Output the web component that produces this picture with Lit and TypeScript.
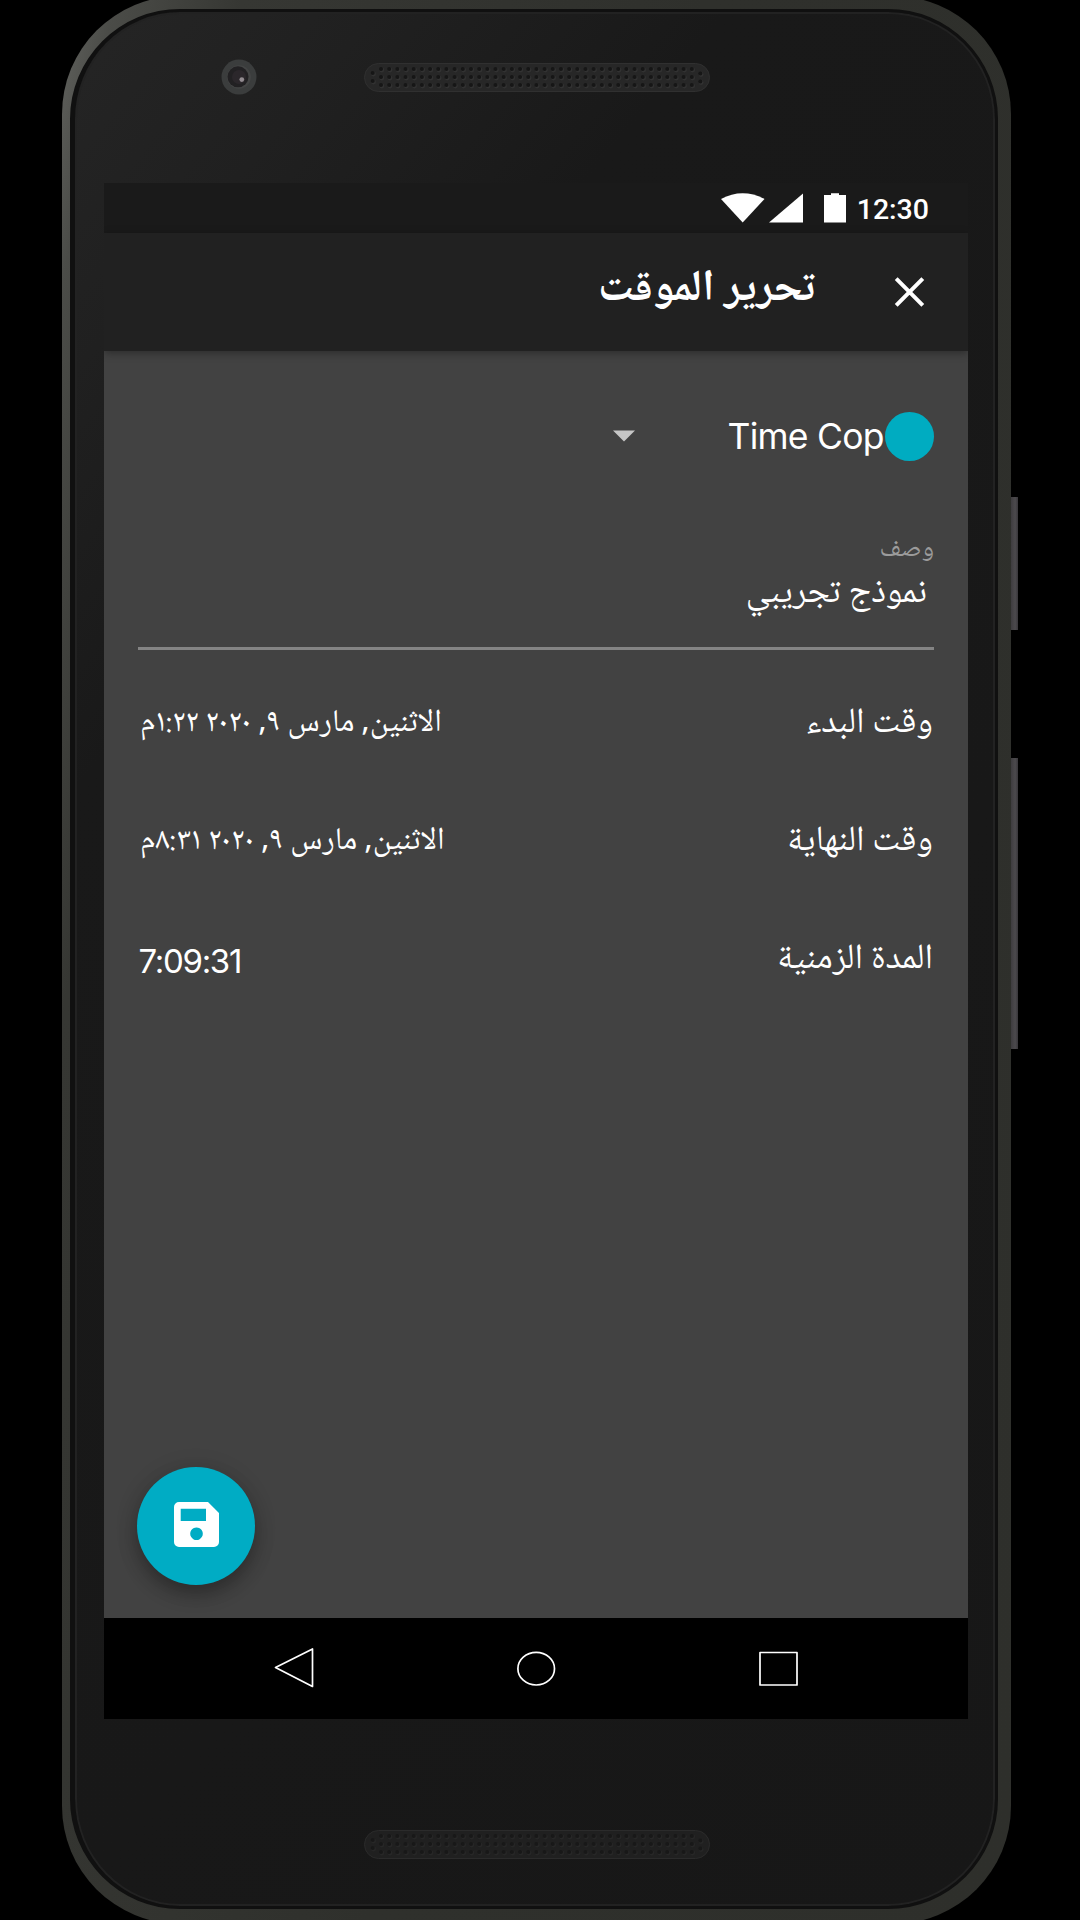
import { LitElement, html, css, svg } from "lit";
import { customElement, property } from "lit/decorators.js";

@customElement("speaker-grille")
class SpeakerGrille extends LitElement {
  @property({ type: Boolean, reflect: true }) dim = false;

  static styles = css`
    :host { display: block; width: 346px; height: 29px; }
    .grille { display: block; }
    .shell { fill: #272727; stroke: #303030; stroke-width: 1; }
    .hole { fill: #161616; }
    .glint { fill: #323232; }
    :host([dim]) .shell { fill: #202020; stroke: #2b2b2b; }
    :host([dim]) .hole { fill: #181818; }
    :host([dim]) .glint { fill: #272727; }
  `;

  render() {
    const points: Array<[number, number]> = [[8.7, 10], [8.7, 18], [336.3, 10.5], [336.3, 18.5]];
    for (let column = 0; column < 39; column++) {
      for (let row = 0; row < 3; row++) {
        points.push([17 + column * 8.18, 6 + row * 8]);
      }
    }
    return html`<svg class="grille" width="346" height="29" viewBox="0 0 346 29">
      <rect class="shell" x=".5" y=".5" width="345" height="28" rx="14"></rect>
      ${points.map(([x, y]) => svg`<circle class="glint" cx=${x + 0.8} cy=${y + 1} r="2.4"></circle><circle class="hole" cx=${x} cy=${y} r="2"></circle>`)}
    </svg>`;
  }
}

@customElement("detail-row")
class DetailRow extends LitElement {
  @property() label = "";
  @property() value = "";
  @property({ type: Boolean, reflect: true }) latin = false;

  static styles = css`
    :host { display: flex; height: 118px; align-items: center; justify-content: space-between; color: #fff; white-space: nowrap; }
    .label { font-size: 35.6px; line-height: 60px; padding-right: 1px; }
    .value { font-size: 31.7px; line-height: 60px; padding-left: 2.5px; }
    :host([latin]) .value { font-size: 33px; letter-spacing: -1.3px; font-family: Inter, sans-serif; padding-top: 3px; padding-left: 1px; }
  `;

  render() {
    return html`<span class="label">${this.label}</span><span class="value">${this.value}</span>`;
  }
}

@customElement("app-root")
class AppRoot extends LitElement {
  static styles = css`
    :host {
      display: block; width: 1080px; height: 1920px; overflow: hidden; background: #000;
      font-family: "Noto Naskh Arabic UI", "Noto Sans Arabic", "Noto Sans", sans-serif;
    }
    * { box-sizing: border-box; }
    .stage { display: flex; width: 1080px; height: 1920px; padding-left: 62px; overflow: hidden; }
    .body {
      flex: none; width: 949px; height: 1928px; margin-top: -4px; padding: 13px 13px 13px 8px; border-radius: 118px;
      background: linear-gradient(100deg, #62635f 0, #4b4c48 4%, #363733 14%, #2f302c 50%, #2e2f2b 100%);
    }
    .glass {
      width: 928px; height: 1900px; border-radius: 110px; border: 3px solid #101010; border-left-width: 5px; padding: 171px 26px 0 29px;
      background: linear-gradient(130deg, #252525 0, #202020 12%, #191919 26%, #171717 100%);
      box-shadow: inset 0 0 0 2px #222;
      display: flex; flex-direction: column; position: relative;
    }
    .camera { position: absolute; left: 146px; top: 47px; }
    .top-speaker { position: absolute; left: 289px; top: 51px; }
    .bottom-speaker { position: absolute; left: 289px; top: 1818px; }
    .keys { display: flex; flex-direction: column; padding-top: 497px; gap: 128px; }
    .key { width: 7px; background: linear-gradient(90deg, #3e3c3f, #4c4a4d 60%, #38363a); }
    .power { height: 133px; }
    .volume { height: 291px; }

    .screen { width: 864px; height: 1536px; flex: none; display: flex; flex-direction: column; background: #424242; direction: rtl; color: #fff; overflow: hidden; }
    .status { height: 50px; background: #1a1a1a; display: flex; align-items: center; padding-right: 39px; direction: ltr; justify-content: flex-end; flex: none; }
    .signals { margin-right: 10px; }
    .clock { font: 500 28.5px/34px Roboto, sans-serif; padding-top: 4px; }
    .appbar { height: 118px; background: #212121; display: flex; padding-right: 41px; box-shadow: 0 2px 8px rgba(0,0,0,.35); flex: none; }
    .close { margin-top: 41px; flex: none; }
    .title { font-size: 44px; font-weight: 700; line-height: 60px; margin: 26px 76px 0 0; white-space: nowrap; }
    .content { height: 1267px; padding: 60px 34px 0 33.5px; position: relative; flex: none; }
    .project { height: 50px; display: flex; align-items: center; }
    .dot { width: 49px; height: 49px; border-radius: 50%; background: #00acc1; }
    .name { font: 400 35.5px/50px Inter, sans-serif; letter-spacing: -.75px; width: 157.5px; white-space: nowrap; padding-top: 1px; }
    .caret { margin-right: 93px; }
    .field { height: 189px; border-bottom: 3px solid #848484; padding-top: 69px; display: flex; flex-direction: column; }
    .hint { font-size: 26.3px; line-height: 40px; color: #9b9b9b; }
    .entry { font-size: 35.6px; line-height: 46px; padding-right: 7px; }
    .rows { padding-top: 14px; }
    .fab { position: absolute; left: 33px; top: 1116px; width: 118px; height: 118px; border-radius: 50%; background: #00acc4; display: grid; place-items: center; box-shadow: 0 10px 18px rgba(0,0,0,.26), 0 2px 24px rgba(0,0,0,.12); padding-bottom: 3px; }
    .nav { height: 101px; background: #000; direction: ltr; flex: none; }
  `;

  render() {
    return html`<div class="stage">
      <div class="body"><div class="glass">
        <svg class="camera" width="36" height="36" viewBox="0 0 36 36">
          <circle cx="18" cy="18" r="17.5" fill="#3b3d3d"></circle>
          <circle cx="18" cy="18" r="11.8" fill="#444545"></circle>
          <circle cx="17" cy="17.8" r="10.5" fill="#222123"></circle>
          <circle cx="18" cy="18" r="7" fill="#2b272b"></circle>
          <circle cx="20.800" cy="20.600" r="2.400" fill="#938c91"></circle>
        </svg>
        <speaker-grille class="top-speaker"></speaker-grille>
        <main class="screen">
          <div class="status">
            <svg class="signals" width="127" height="30" viewBox="0 0 127 30" fill="#fff">
              <path d="M1 6Q22.500-5.500 44.500 6L22.700 29.500z"></path>
              <path d="M83 .5V29.500H49z"></path>
              <path d="M104 2h7V.3h8V2h7v27.500h-22z"></path>
            </svg>
            <span class="clock">12:30</span>
          </div>
          <header class="appbar">
            <svg class="close" width="36" height="36" viewBox="0 0 36 36"><path d="M5.200 4.700l26.600 26.600M31.800 4.700L5.200 31.300" stroke="#fff" stroke-width="4"></path></svg>
            <span class="title">تحرير الموقت</span>
          </header>
          <section class="content">
            <div class="project">
              <span class="dot"></span><span class="name" dir="ltr">Time Cop</span>
              <svg class="caret" width="22" height="12" viewBox="0 0 22 12"><path d="M0 .5h22L11 11.500z" fill="#c6c6c6"></path></svg>
            </div>
            <div class="field"><span class="hint">وصف</span><span class="entry">نموذج تجريبي</span></div>
            <div class="rows">
              <detail-row label="وقت البدء" value="الاثنين, مارس ٩, ٢٠٢٠ ١:٢٢م"></detail-row>
              <detail-row label="وقت النهاية" value="الاثنين, مارس ٩, ٢٠٢٠ ٨:٣١م"></detail-row>
              <detail-row latin label="المدة الزمنية" value="7:09:31"></detail-row>
            </div>
            <div class="fab">
              <svg width="45" height="45" viewBox="0 0 45 45"><path fill="#fff" fill-rule="evenodd" d="M5 0H34L45 11V40a5 5 0 0 1-5 5H5a5 5 0 0 1-5-5V5a5 5 0 0 1 5-5zM6.700 6.700V19H32V6.700zM22.500 25.400a6.300 6.300 0 1 0 .01 0z"></path></svg>
            </div>
          </section>
          <svg class="nav" width="864" height="101" viewBox="0 0 864 101" fill="none" stroke="#fff" stroke-width="1.700" stroke-linejoin="round">
            <path d="M171.500 49.500L208.500 31V68.500z"></path>
            <ellipse cx="432.200" cy="50.700" rx="18.300" ry="16.300"></ellipse>
            <rect x="656" y="34.500" width="37" height="32.500"></rect>
          </svg>
        </main>
        <speaker-grille dim class="bottom-speaker"></speaker-grille>
      </div></div>
      <div class="keys"><span class="key power"></span><span class="key volume"></span></div>
    </div>`;
  }
}
